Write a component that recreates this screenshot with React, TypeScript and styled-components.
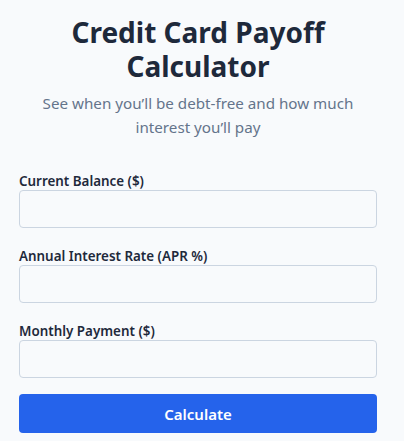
import { createGlobalStyle } from 'styled-components';
import styled from 'styled-components';

const GlobalStyle = createGlobalStyle`
  body {
    margin: 0;
    background: #f8fafc;
    font-family: 'Noto Sans', 'Open Sans', Arial, sans-serif;
  }
`;

const fields = [
  { id: 'balance', label: 'Current Balance ($)' },
  { id: 'apr', label: 'Annual Interest Rate (APR %)' },
  { id: 'payment', label: 'Monthly Payment ($)' },
];

function App() {
  return (
    <>
      <GlobalStyle />
      <Page>
        <Header>
          <Title>Credit Card Payoff Calculator</Title>
          <Subtitle>See when you’ll be debt-free and how much interest you’ll pay</Subtitle>
        </Header>
        <Form onSubmit={(e) => e.preventDefault()}>
          {fields.map((f) => (
            <Field key={f.id}>
              <Label htmlFor={f.id}>{f.label}</Label>
              <Input id={f.id} type="number" />
            </Field>
          ))}
          <Button type="submit">Calculate</Button>
        </Form>
      </Page>
    </>
  );
}

const Page = styled.main`
  width: 396px;
  box-sizing: border-box;
  padding: 15px 19px 0;
`;

const Header = styled.header`
  text-align: center;
  margin-bottom: 33px;
`;

const Title = styled.h1`
  margin: 0 0 8px;
  font-size: 28px;
  line-height: 34px;
  font-weight: 700;
  color: #1e293b;
`;

const Subtitle = styled.p`
  margin: 0;
  font-size: 15.2px;
  line-height: 24px;
  color: #64748b;
`;

const Form = styled.form`
  display: flex;
  flex-direction: column;
`;

const Field = styled.div`
  display: flex;
  flex-direction: column;
  margin-bottom: 19px;

  &:last-of-type {
    margin-bottom: 16px;
  }
`;

const Label = styled.label`
  font-size: 13.4px;
  line-height: 18px;
  font-weight: 600;
  color: #1e293b;
`;

const Input = styled.input`
  box-sizing: border-box;
  height: 38px;
  width: 100%;
  border: 1px solid #cbd5e1;
  border-radius: 4px;
  background: #f8fafc;
  padding: 0 10px;
  font: inherit;
`;

const Button = styled.button`
  height: 39px;
  border: none;
  border-radius: 4px;
  background: #2563eb;
  color: #ffffff;
  font: inherit;
  font-size: 15px;
  font-weight: 600;
  cursor: pointer;
`;

export default App;
